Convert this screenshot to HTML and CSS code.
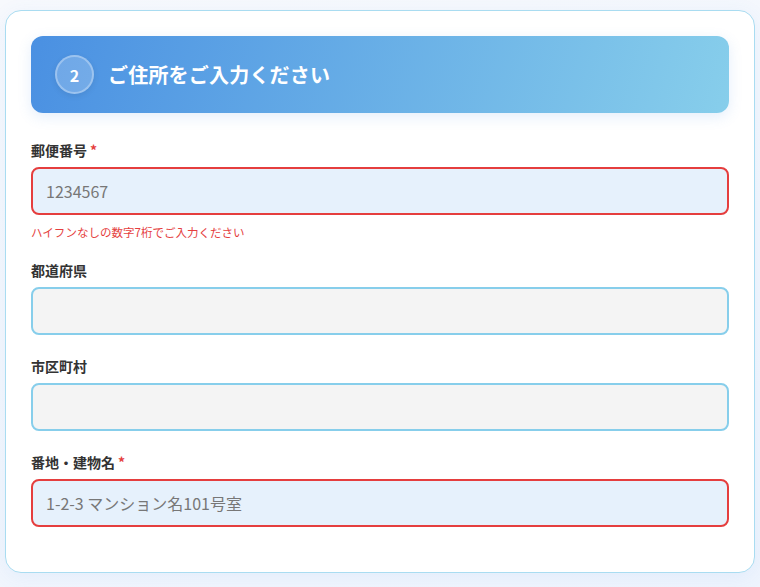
FILE: index.html
```html
<!DOCTYPE html>
<html lang="ja">
<head>
<meta charset="utf-8">
<title>ご住所の入力</title>
<link rel="stylesheet" href="styles.css">
</head>
<body>
  <form class="card">
    <div class="step-header">
      <span class="step-num">2</span>
      <h2 class="step-title">ご住所をご入力ください</h2>
    </div>

    <div class="field">
      <label class="field-label">郵便番号<span class="req">*</span></label>
      <input class="field-input is-error" type="text" placeholder="1234567">
      <p class="field-error">ハイフンなしの数字7桁でご入力ください</p>
    </div>

    <div class="field">
      <label class="field-label">都道府県</label>
      <input class="field-input is-readonly" type="text" readonly>
    </div>

    <div class="field">
      <label class="field-label">市区町村</label>
      <input class="field-input is-readonly" type="text" readonly>
    </div>

    <div class="field">
      <label class="field-label">番地・建物名<span class="req">*</span></label>
      <input class="field-input is-error" type="text" placeholder="1-2-3 マンション名101号室">
    </div>
  </form>
</body>
</html>
```
FILE: styles.css
```css
* {
  box-sizing: border-box;
}

html, body {
  margin: 0;
  height: 100%;
}

body {
  padding: 10px 5px 0 5px;
  background: linear-gradient(160deg, #f7f9fd 0%, #eef4fd 100%);
  font-family: "Noto Sans CJK JP", "Noto Sans", sans-serif;
  color: #333;
}

.card {
  width: 750px;
  background: #fff;
  border: 1px solid #a9dcf1;
  border-radius: 16px;
  padding: 25px 25px 24px 25px;
  box-shadow: 0 4px 20px rgba(74, 144, 226, 0.08);
}

.step-header {
  display: flex;
  align-items: center;
  gap: 14px;
  height: 77px;
  padding: 0 24px;
  border-radius: 12px;
  background: linear-gradient(105deg, #4a90e2 0%, #87ceeb 100%);
  box-shadow: 0 4px 14px rgba(74, 144, 226, 0.15);
  margin-bottom: 27px;
}

.step-num {
  width: 39px;
  height: 39px;
  border-radius: 50%;
  background: rgba(255, 255, 255, 0.2);
  border: 2px solid rgba(255, 255, 255, 0.3);
  box-shadow: 0 2px 6px rgba(0, 0, 0, 0.08);
  color: #fff;
  font-size: 16px;
  font-weight: 700;
  display: flex;
  align-items: center;
  justify-content: center;
  flex-shrink: 0;
}

.step-title {
  margin: 0;
  color: #fff;
  font-size: 20px;
  font-weight: 700;
  letter-spacing: 0.2px;
}

.field {
  margin-bottom: 21px;
}

.field-label {
  display: block;
  font-size: 14px;
  font-weight: 700;
  line-height: 21px;
  color: #333;
  margin-bottom: 6px;
}

.req {
  color: #e53e3e;
  margin-left: 3px;
}

.field-input {
  display: block;
  width: 100%;
  height: 48px;
  padding: 0 13px;
  border-radius: 8px;
  border: 2px solid #87ceeb;
  font-family: inherit;
  font-size: 16px;
  color: #333;
  outline: none;
}

.field-input::placeholder {
  color: #777;
}

.field-input.is-error {
  border-color: #e53e3e;
  background: #e6f1fc;
}

.field-input.is-readonly {
  background: #f4f4f4;
}

.field-error {
  margin: 8px 0 -2px 0;
  font-size: 11.5px;
  line-height: 18px;
  color: #e53e3e;
}
```
